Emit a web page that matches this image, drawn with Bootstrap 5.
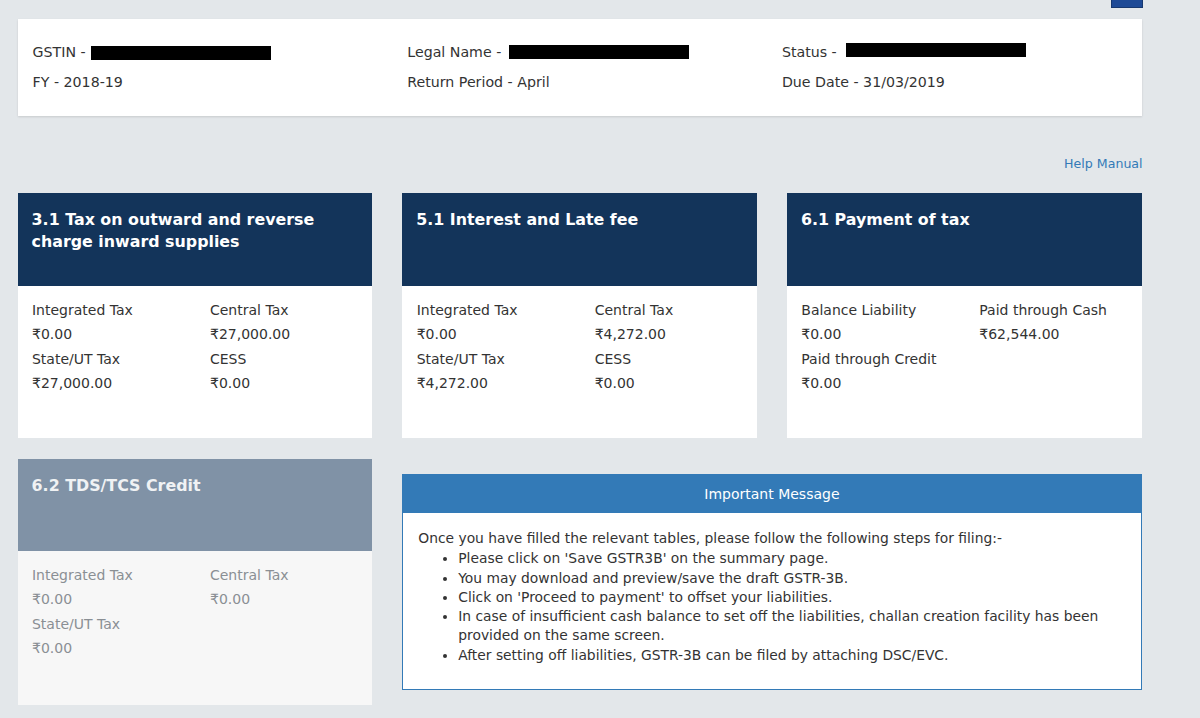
<!DOCTYPE html>
<html lang="en">
<head>
    <meta charset="UTF-8">
    <meta name="viewport" content="width=device-width, initial-scale=1.0">
    <title>GSTR-3B</title>
    <link rel="stylesheet" href="https://cdn.jsdelivr.net/npm/bootstrap@5.3.0/dist/css/bootstrap.min.css">
    <style>
        body { background: #e3e7ea; font-family: "DejaVu Sans", Verdana, sans-serif; font-size: 14px; color: #333; overflow: hidden; }
        .page { width: 1124px; margin-left: 17.6px; }
        .top-btn { width: 32px; height: 8px; background: #1e4a96; margin-right: -1px; margin-bottom: 11px; border: 1px solid #17386f; border-top: 0; }
        .info-card { height: 97px; background: #fff; box-shadow: 0 1px 2px rgba(0,0,0,.12); padding: 23px 15px 0; }
        .info-card .row { --bs-gutter-x: 30px; }
        .info-line { height: 30px; line-height: 20px; font-size: 14.2px; }
        .redact { display: inline-block; width: 180px; height: 14px; background: #000; vertical-align: middle; margin-left: 1.2px; }
        .redact.up1 { position: relative; top: -1px; margin-left: 3px; }
        .redact.up2 { position: relative; top: -3px; margin-left: 5px; }
        .help { height: 77px; padding-top: 39px; margin-right: -1px; line-height: 18px; text-align: right; font-size: 12.6px; }
        .help a { color: #337ab7; text-decoration: none; }
        .tiles { --bs-gutter-x: 30px; }
        .tile { background: #fff; height: 245px; }
        .tile-head { background: #13345a; color: #fff; height: 93px; padding: 16px 14px; font-weight: 700; font-size: 15.85px; line-height: 22px; }
        .tile-body { padding: 12px 14px 0 14.4px; }
        .tile-grid { display: grid; grid-template-columns: 178px 1fr; }
        .lbl { line-height: 24px; height: 24px; }
        .val { line-height: 24px; height: 25px; }
        .tile.off { background: #f7f7f7; margin-top: 21px; height: 246px; color: #8a8f94; }
        .tile.off .tile-head { background: #8092a6; height: 92px; color: #f0f2f4; }
        .msg { margin-top: 36px; height: 216px; background: #fff; border: 1px solid #337ab7; }
        .msg-head { background: #337ab7; color: #fff; height: 38px; line-height: 38px; text-align: center; }
        .msg-body { padding: 16px 15px; line-height: 19.3px; font-size: 13.85px; color: #333; }
        .msg-body ul { margin: 1px 0 0; padding-left: 40px; }
    </style>
</head>
<body>
    <div class="page">
        <div class="d-flex justify-content-end"><div class="top-btn"></div></div>

        <!-- return details -->
        <div class="info-card">
            <div class="row">
                <div class="col-4">
                    <div class="info-line">GSTIN - <span class="redact"></span></div>
                    <div class="info-line">FY - 2018-19</div>
                </div>
                <div class="col-4">
                    <div class="info-line">Legal Name - <span class="redact up1"></span></div>
                    <div class="info-line">Return Period - April</div>
                </div>
                <div class="col-4">
                    <div class="info-line">Status - <span class="redact up2"></span></div>
                    <div class="info-line">Due Date - 31/03/2019</div>
                </div>
            </div>
        </div>

        <div class="help"><a href="#">Help Manual</a></div>

        <div class="row tiles">
            <div class="col-4">
                <div class="tile">
                    <div class="tile-head">3.1 Tax on outward and reverse charge inward supplies</div>
                    <div class="tile-body tile-grid">
                        <div><div class="lbl">Integrated Tax</div><div class="val">₹0.00</div></div>
                        <div><div class="lbl">Central Tax</div><div class="val">₹27,000.00</div></div>
                        <div><div class="lbl">State/UT Tax</div><div class="val">₹27,000.00</div></div>
                        <div><div class="lbl">CESS</div><div class="val">₹0.00</div></div>
                    </div>
                </div>
            </div>
            <div class="col-4">
                <div class="tile">
                    <div class="tile-head">5.1 Interest and Late fee</div>
                    <div class="tile-body tile-grid">
                        <div><div class="lbl">Integrated Tax</div><div class="val">₹0.00</div></div>
                        <div><div class="lbl">Central Tax</div><div class="val">₹4,272.00</div></div>
                        <div><div class="lbl">State/UT Tax</div><div class="val">₹4,272.00</div></div>
                        <div><div class="lbl">CESS</div><div class="val">₹0.00</div></div>
                    </div>
                </div>
            </div>
            <div class="col-4">
                <div class="tile">
                    <div class="tile-head">6.1 Payment of tax</div>
                    <div class="tile-body tile-grid">
                        <div><div class="lbl">Balance Liability</div><div class="val">₹0.00</div></div>
                        <div><div class="lbl">Paid through Cash</div><div class="val">₹62,544.00</div></div>
                        <div><div class="lbl">Paid through Credit</div><div class="val">₹0.00</div></div>
                    </div>
                </div>
            </div>
            <div class="col-4">
                <div class="tile off">
                    <div class="tile-head">6.2 TDS/TCS Credit</div>
                    <div class="tile-body tile-grid">
                        <div><div class="lbl">Integrated Tax</div><div class="val">₹0.00</div></div>
                        <div><div class="lbl">Central Tax</div><div class="val">₹0.00</div></div>
                        <div><div class="lbl">State/UT Tax</div><div class="val">₹0.00</div></div>
                    </div>
                </div>
            </div>
            <div class="col-8">
                <div class="msg">
                    <div class="msg-head">Important Message</div>
                    <div class="msg-body">
                        Once you have filled the relevant tables, please follow the following steps for filing:-
                        <ul>
                            <li>Please click on 'Save GSTR3B' on the summary page.</li>
                            <li>You may download and preview/save the draft GSTR-3B.</li>
                            <li>Click on 'Proceed to payment' to offset your liabilities.</li>
                            <li>In case of insufficient cash balance to set off the liabilities, challan creation facility has been provided on the same screen.</li>
                            <li>After setting off liabilities, GSTR-3B can be filed by attaching DSC/EVC.</li>
                        </ul>
                    </div>
                </div>
            </div>
        </div>
    </div>
    <script src="https://cdn.jsdelivr.net/npm/bootstrap@5.3.0/dist/js/bootstrap.bundle.min.js"></script>
</body>
</html>
